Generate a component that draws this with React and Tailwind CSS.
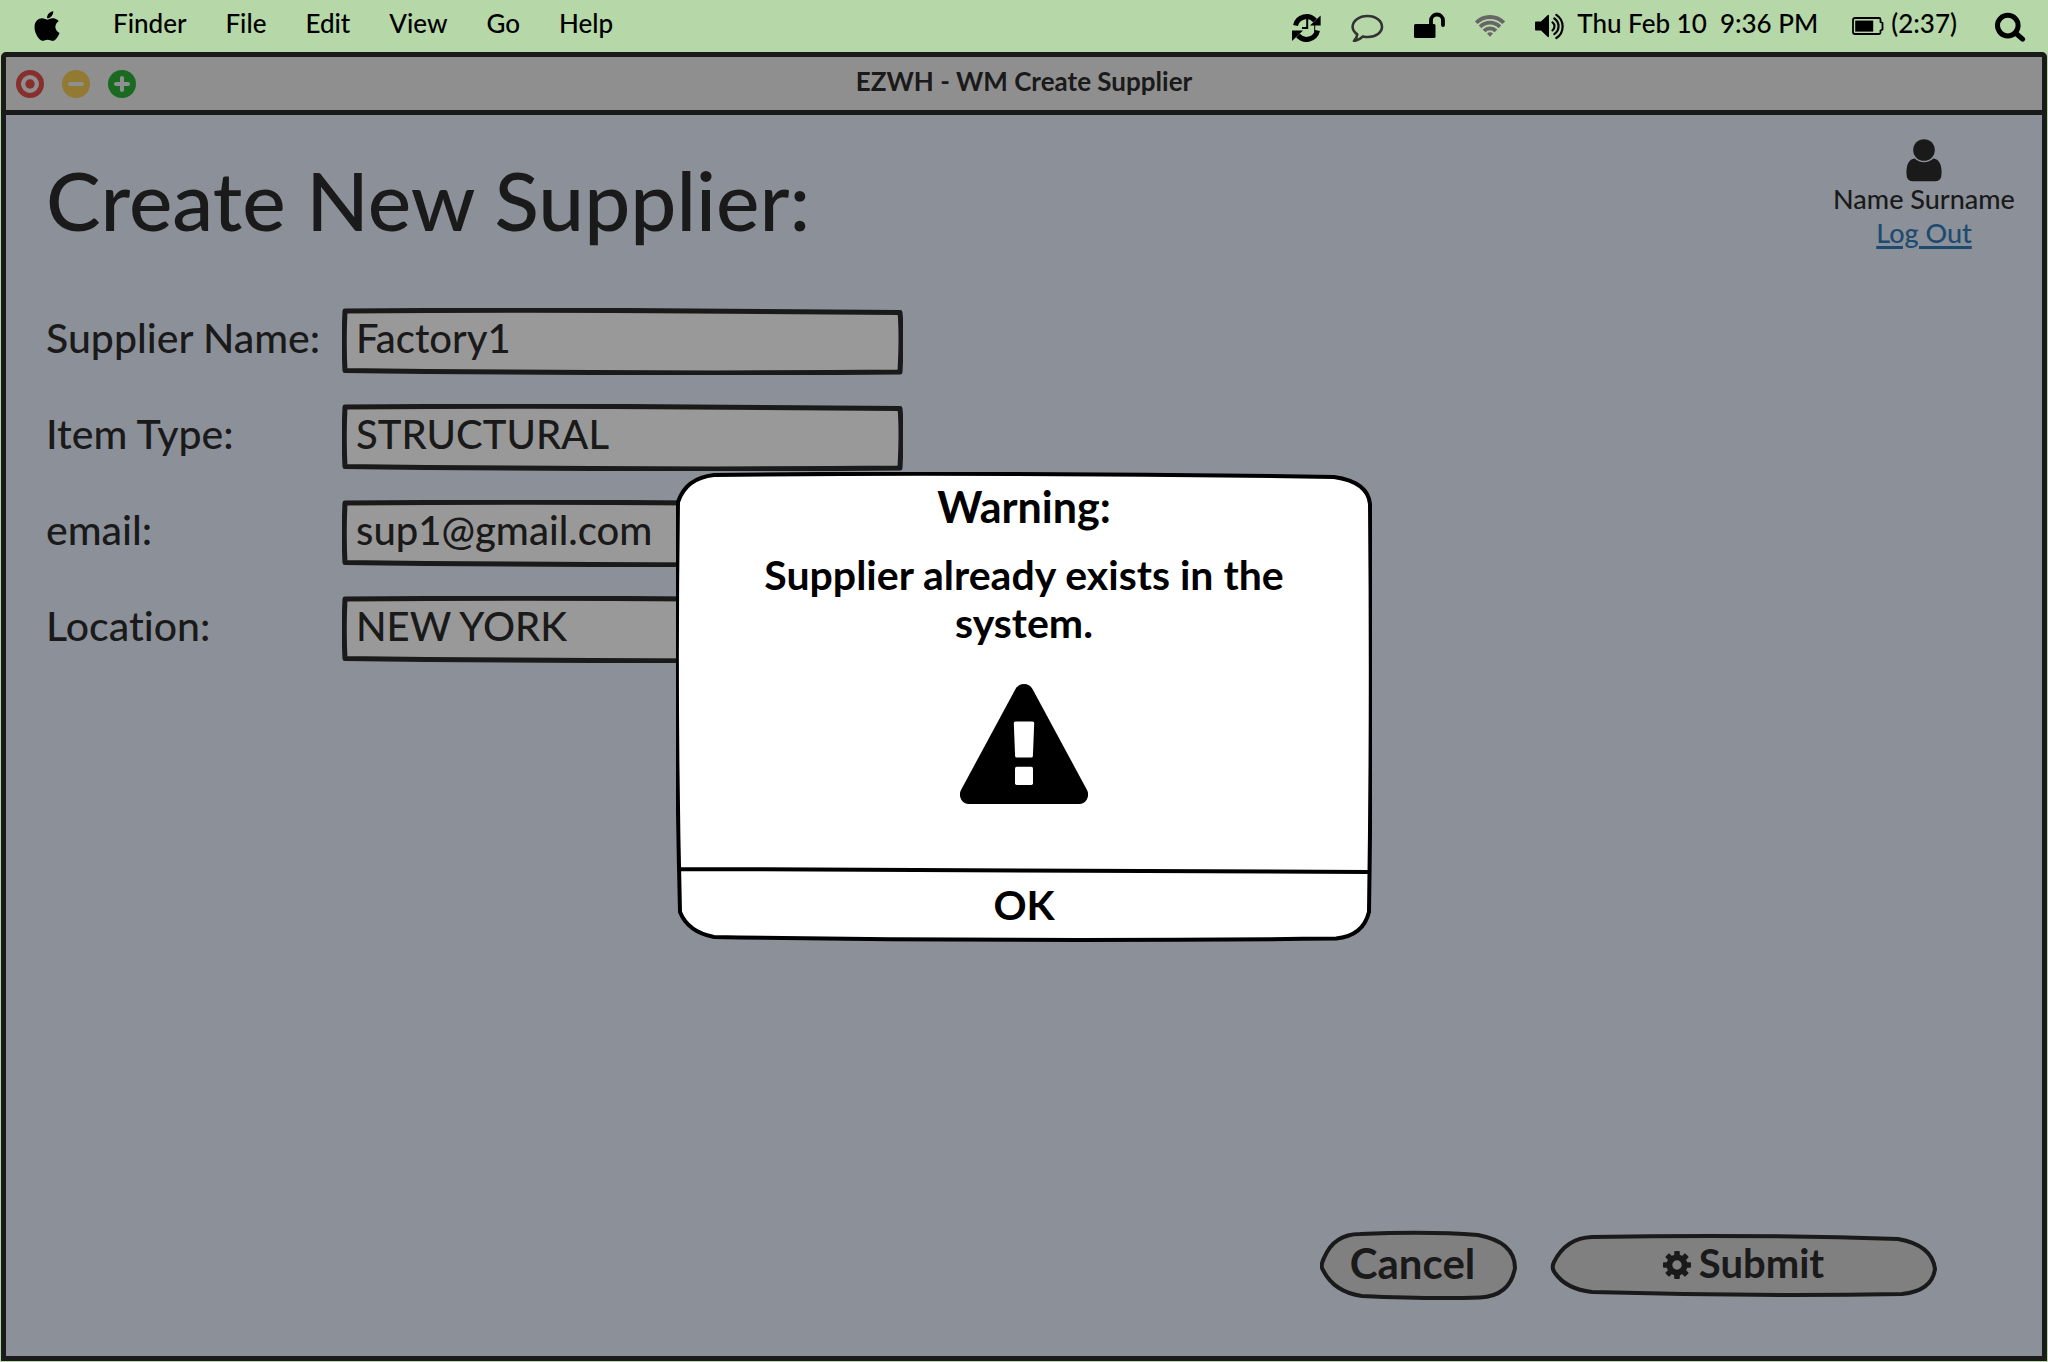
import React from "react";
import { FaApple } from "react-icons/fa";

const menus = ["Finder", "File", "Edit", "View", "Go", "Help"];

const fields = [
  { id: "name", label: "Supplier Name:", value: "Factory1", type: "text" },
  { id: "type", label: "Item Type:", value: "STRUCTURAL", type: "text" },
  { id: "email", label: "email:", value: "sup1@gmail.com", type: "email" },
  { id: "location", label: "Location:", value: "NEW YORK", type: "text" },
];

function Outline({ viewBox, d, className }) {
  return (
    <svg
      viewBox={viewBox}
      preserveAspectRatio="none"
      aria-hidden="true"
      className={`pointer-events-none absolute inset-0 size-full ${className}`}
    >
      <path d={d} strokeLinejoin="round" strokeLinecap="round" />
    </svg>
  );
}

function SyncIcon() {
  return (
    <svg width="29" height="32" viewBox="0 0 29 32" fill="none" stroke="#000" aria-hidden="true">
      <path d="M3.5 15.5A11.3 11.3 0 0 1 23 10.5" strokeWidth="5" />
      <path d="M25.5 20.5A11.3 11.3 0 0 1 6 25.5" strokeWidth="5" />
      <path d="M28.6 5.5V15.5H18Z" fill="#000" stroke="none" />
      <path d="M0 31V20.5H11Z" fill="#000" stroke="none" />
      <path d="M15.2 8V18H10" strokeWidth="2" />
      <path d="M22.7 15V22" strokeWidth="1" />
    </svg>
  );
}

function CommentIcon() {
  return (
    <svg width="33" height="32" viewBox="0 0 33 32" fill="none" aria-hidden="true">
      <path
        d="M16.5 6C25 6 31 11 31 16.8C31 22.5 25 27 17 27C15.5 27 13.5 26.8 12 26.4C9.5 29 6.5 30.5 3 31C5 29 6 27 6.3 24.3C3.5 22.5 1.6 20 1.6 16.8C1.6 11 8 6 16.5 6Z"
        stroke="#333"
        strokeWidth="2.6"
        strokeLinejoin="round"
      />
    </svg>
  );
}

function UnlockIcon() {
  return (
    <svg width="31" height="32" viewBox="0 0 31 32" aria-hidden="true">
      <rect x="0" y="14" width="21.5" height="14" rx="1.5" />
      <path d="M17 15V10.5A6 6 0 0 1 29 10.5V15" fill="none" stroke="#000" strokeWidth="3.8" strokeLinecap="round" />
    </svg>
  );
}

function WifiIcon() {
  return (
    <svg width="30" height="32" viewBox="0 0 30 32" fill="none" stroke="#666" strokeWidth="3.8" aria-hidden="true">
      <path d="M1.2 12.7A19.5 19.5 0 0 1 28.8 12.7" />
      <path d="M5.1 16.8A14 14 0 0 1 24.9 16.8" />
      <path d="M9 20.8A8.6 8.6 0 0 1 21 20.8" />
      <path d="M12 23.6A4.3 4.3 0 0 1 18 23.6L15 26.7Z" fill="#666" stroke="none" />
    </svg>
  );
}

function VolumeIcon() {
  return (
    <svg width="31" height="32" viewBox="0 0 31 32" aria-hidden="true">
      <path d="M1 11.5H6L12.5 5.2Q14 4.2 14 6V26Q14 27.8 12.5 26.8L6 20.5H1Q0 20.5 0 19.5V12.5Q0 11.5 1 11.5Z" />
      <g fill="none" stroke="#000" strokeWidth="2.2" strokeLinecap="round">
        <path d="M17.5 12.3A5 5 0 0 1 17.5 20.3" />
        <path d="M19.3 8.5A9.4 9.4 0 0 1 19.3 24.2" />
        <path d="M21.3 4.8A13.8 13.8 0 0 1 21.3 28" />
      </g>
    </svg>
  );
}

function BatteryIcon() {
  return (
    <svg width="32" height="32" viewBox="0 0 32 32" aria-hidden="true">
      <path
        d="M3 8H27Q28.5 8 28.5 9.5V12L30.5 13V19.5L28.5 20.5V22.5Q28.5 24 27 24H3Q1 24 1 22V10Q1 8 3 8Z"
        fill="none"
        stroke="#000"
        strokeWidth="1.8"
      />
      <rect x="3.2" y="10.6" width="18" height="11" />
    </svg>
  );
}

function SearchIcon() {
  return (
    <svg width="31" height="32" viewBox="0 0 31 32" fill="none" stroke="#000" strokeWidth="5" aria-hidden="true">
      <circle cx="12.8" cy="15.6" r="10.3" />
      <path d="M20.5 23L27.6 29.2" strokeLinecap="round" />
    </svg>
  );
}

function UserIcon() {
  return (
    <svg width="36" height="43" viewBox="0 0 36 43" fill="#1a1a1a" aria-hidden="true">
      <circle cx="18" cy="11" r="10.8" />
      <path d="M8.5 19.5Q12.5 23.2 18 23.2Q23.5 23.2 27.5 19.5Q35.6 20.5 35.6 34Q35.6 42.3 29.5 42.3H6.5Q.4 42.3 .4 34Q.4 20.5 8.5 19.5Z" />
    </svg>
  );
}

function GearIcon() {
  return (
    <svg width="28" height="28" viewBox="-14 -14 28 28" fill="#1a1a1a" aria-hidden="true">
      <circle r="7.6" fill="none" stroke="#1a1a1a" strokeWidth="5.8" />
      {[0, 45, 90, 135, 180, 225, 270, 315].map((a) => (
        <rect key={a} x="-2.8" y="-14" width="5.6" height="6" rx="1" transform={`rotate(${a})`} />
      ))}
    </svg>
  );
}

function WarningIcon() {
  return (
    <svg width="128" height="120" viewBox="0 0 128 120" aria-hidden="true">
      <path d="M55.5 5Q58.5 0 64 0Q69.5 0 72.5 5L127 106Q129.5 111 126.5 116Q124 120 119 120H9Q4 120 1.5 116Q-1.5 111 1 106Z" />
      <path
        d="M55.5 37.5H72.5Q74.3 37.5 74.2 39.3L72.9 72Q72.8 73.6 71.2 73.6H56.8Q55.2 73.6 55.1 72L53.8 39.3Q53.7 37.5 55.5 37.5Z"
        fill="#fff"
      />
      <rect x="55" y="82.7" width="18" height="18.3" rx="1.7" fill="#fff" />
    </svg>
  );
}

function MenuBar() {
  return (
    <header className="flex h-[52px] items-center pr-[22px] pl-[34px] text-[26px] leading-8 font-medium text-black">
      <button type="button" aria-label="Apple menu" className="mr-[53px] pb-px">
        <FaApple className="h-[34px] w-[26px]" />
      </button>
      <nav className="flex gap-[39px] pb-[6px]">
        {menus.map((m) => (
          <button key={m} type="button">
            {m}
          </button>
        ))}
      </nav>
      <div className="ml-auto flex items-center">
        <div className="mr-[11px] flex items-center gap-[30px]">
          <SyncIcon />
          <CommentIcon />
          <UnlockIcon />
          <WifiIcon />
          <VolumeIcon />
        </div>
        <time className="mr-[34px] pb-[6px] whitespace-pre">Thu Feb 10  9:36 PM</time>
        <BatteryIcon />
        <span className="mr-[38px] ml-[7px] pb-[6px]">(2:37)</span>
        <button type="button" aria-label="Search">
          <SearchIcon />
        </button>
      </div>
    </header>
  );
}

function TitleBar() {
  return (
    <div className="grid h-[58px] grid-cols-[1fr_auto_1fr] items-center border-b-5 border-[#1a1a1a] bg-[#8f8f8f] px-[10px]">
      <div className="flex gap-[18px]">
        <button type="button" aria-label="Close">
          <svg width="28" height="28" viewBox="0 0 28 28" className="block">
            <circle cx="14" cy="14" r="11.5" fill="none" stroke="#882e2d" strokeWidth="5" />
            <circle cx="14" cy="14" r="4.7" fill="#882e2d" />
          </svg>
        </button>
        <button type="button" aria-label="Minimize">
          <svg width="28" height="28" viewBox="0 0 28 28" className="block">
            <circle cx="14" cy="14" r="14" fill="#927a32" />
            <path d="M8 14H20" stroke="#8f8f8f" strokeWidth="4" strokeLinecap="round" />
          </svg>
        </button>
        <button type="button" aria-label="Zoom">
          <svg width="28" height="28" viewBox="0 0 28 28" className="block">
            <circle cx="14" cy="14" r="14" fill="#1b6a22" />
            <path d="M8 14H20M14 8V20" stroke="#8f8f8f" strokeWidth="4" strokeLinecap="round" />
          </svg>
        </button>
      </div>
      <span className="pb-[5px] text-[26px] leading-8 font-bold">EZWH - WM Create Supplier</span>
    </div>
  );
}

function Field({ id, label, value, type }) {
  return (
    <>
      <label htmlFor={id} className="pb-[7px] text-[41px] leading-[60px] font-medium">
        {label}
      </label>
      <div className="relative h-[67px]">
        <Outline
          viewBox="0 0 561 67"
          d="M3 3Q200 1.500 350 3Q460 4 558 4.500Q560 25 558 64Q400 65.500 250 64.500Q120 64 3 62.500Q1.500 35 3 3Z"
          className="fill-[#999999] stroke-[#1a1a1a] stroke-5"
        />
        <input
          id={id}
          type={type}
          defaultValue={value}
          className="relative size-full bg-transparent px-[14px] pb-[7px] text-[40px] font-medium outline-none"
        />
      </div>
    </>
  );
}

function WarningDialog() {
  return (
    <div className="absolute inset-0 flex items-center justify-center">
      <section
        role="alertdialog"
        aria-modal="true"
        aria-labelledby="warning-title"
        aria-describedby="warning-text"
        className="relative h-[470px] w-[696px] text-black"
      >
        <Outline
          viewBox="0 0 696 470"
          d="M38 3Q200 1 340 2Q500 2.500 658 5Q692 10 694 32Q696 240 693 440Q687 464 660 466.500Q350 470 38 465Q12 460 4 440Q-1 240 2 30Q10 6 38 3ZM4 397Q350 398 692 400"
          className="fill-white stroke-black stroke-4"
        />
        <div className="relative flex h-full flex-col items-center pt-[11px] text-center font-bold">
          <h2 id="warning-title" className="text-[43px] leading-[48px]">
            Warning:
          </h2>
          <p id="warning-text" className="mt-5 w-[600px] text-[41px] leading-[48px]">
            Supplier already exists in the system.
          </p>
          <div className="mt-[37px]">
            <WarningIcon />
          </div>
          <button type="button" className="mt-auto h-[70px] w-full pb-1 text-[41px] leading-[48px]">
            OK
          </button>
        </div>
      </section>
    </div>
  );
}

export default function App() {
  return (
    <div className="flex min-h-screen flex-col bg-[#b6d7a8] font-['Lato','Open_Sans',sans-serif] text-[#1a1a1a] [font-variant-ligatures:none]">
      <MenuBar />
      <div className="relative flex flex-1 flex-col px-px pb-px">
        <main className="flex flex-1 flex-col rounded-t-[5px] border-5 border-[#1a1a1a] bg-[#8c9098]">
          <TitleBar />
          <div className="flex items-start justify-between pr-[26px] pl-10">
            <h1 className="pt-[34px] text-[82px] leading-[100px] font-medium">Create New Supplier:</h1>
            <div className="flex w-[184px] flex-col items-center pt-6 text-[27px] leading-[34px] font-medium whitespace-nowrap">
              <UserIcon />
              <span>Name Surname</span>
              <a href="#logout" className="text-[#1d4a70] underline decoration-3 underline-offset-3">
                Log Out
              </a>
            </div>
          </div>
          <form className="flex flex-1 flex-col">
            <div className="mt-[58px] grid grid-cols-[296px_561px] items-center gap-y-[29px] pl-10">
              {fields.map((f) => (
                <Field key={f.id} {...f} />
              ))}
            </div>
            <div className="mt-auto flex items-center justify-end gap-[33px] pr-[105px] pb-[56px]">
              <button type="button" className="relative h-[70px] w-[197px]">
                <Outline
                  viewBox="0 0 197 70"
                  d="M40 4Q110 1 158 5Q195 12 195 38Q190 66 160 67.500Q110 69 42 66Q14 62 3 40Q0 36 4 28Q14 4 40 4Z"
                  className="fill-[#808080] stroke-[#1a1a1a] stroke-4"
                />
                <span className="relative block pr-3 pb-1 text-[42px] leading-[48px] font-bold">Cancel</span>
              </button>
              <button type="submit" className="relative h-[64px] w-[387px]">
                <Outline
                  viewBox="0 0 387 64"
                  d="M42 4Q200 1 348 6Q382 12 385 36Q382 58 352 61Q200 63.500 42 59Q16 56 5 40Q1 35 4 29Q16 5 42 4Z"
                  className="fill-[#808080] stroke-[#1a1a1a] stroke-4"
                />
                <span className="relative flex items-center justify-center gap-2 pb-1 text-[40px] leading-[48px] font-bold">
                  <span className="pt-1">
                    <GearIcon />
                  </span>
                  Submit
                </span>
              </button>
            </div>
          </form>
        </main>
        <WarningDialog />
      </div>
    </div>
  );
}
